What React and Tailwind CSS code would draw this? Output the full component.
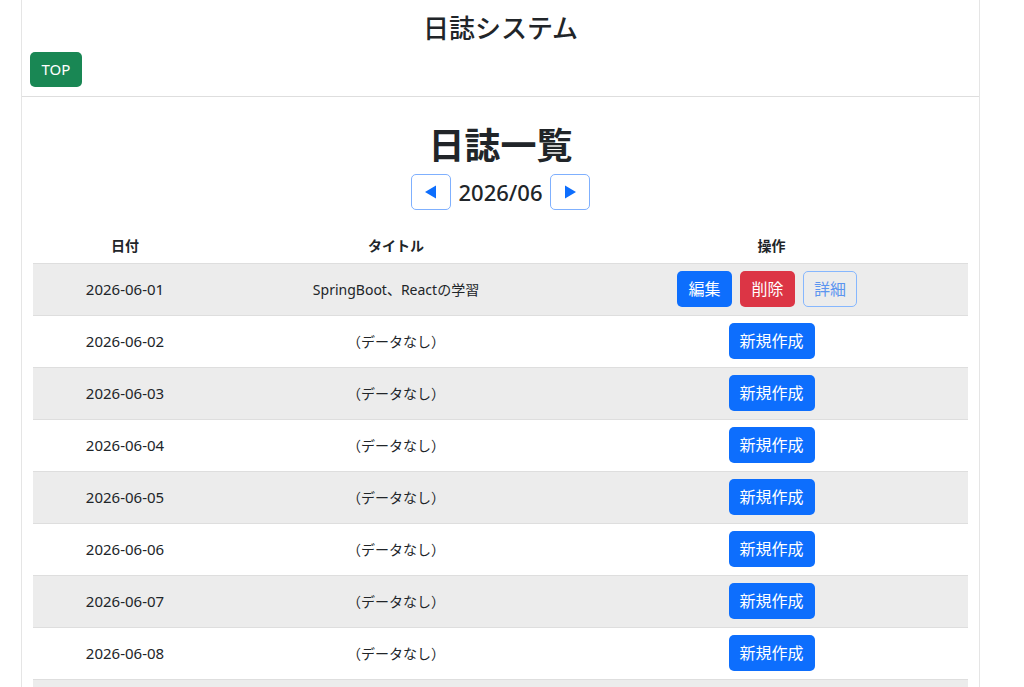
import React from "react";

const days = Array.from({ length: 9 }, (_, i) => {
  const d = String(i + 1).padStart(2, "0");
  return {
    date: `2026-06-${d}`,
    title: i === 0 ? "SpringBoot、Reactの学習" : null,
  };
});

const App = () => {
  return (
    <div
      className="min-h-screen bg-white text-[#212529]"
      style={{ fontFamily: '"Noto Sans", "Noto Sans CJK JP", sans-serif' }}
    >
      <div className="ml-[21px] w-[959px] min-h-screen border-x border-[#e5e5e5]">
        {/* Header */}
        <header className="border-b border-[#dedede] pb-[9px]">
          <h1 className="text-center text-[26px] font-medium leading-[56px]">
            日誌システム
          </h1>
          <div className="px-[8px] -mt-[4px]">
            <button className="h-[35px] w-[52px] rounded-[5px] bg-[#198754] text-[15px] text-white">
              TOP
            </button>
          </div>
        </header>

        {/* Journal list */}
        <main className="px-[11px] pt-[22px]">
          <h2 className="text-center text-[36px] font-bold leading-[54px]">
            日誌一覧
          </h2>
          <div className="flex items-center justify-center gap-[8px] mt-[1px]">
            <button className="flex h-[36px] w-[40px] items-center justify-center rounded-[5px] border border-[#7fb0fe] text-[#0d6efd]">
              <svg width="13" height="14" viewBox="0 0 13 14">
                <path d="M12 0.5 L1 7 L12 13.5 Z" fill="currentColor" />
              </svg>
            </button>
            <span className="text-[22px] font-medium">2026/06</span>
            <button className="flex h-[36px] w-[40px] items-center justify-center rounded-[5px] border border-[#7fb0fe] text-[#0d6efd]">
              <svg width="13" height="14" viewBox="0 0 13 14">
                <path d="M1 0.5 L12 7 L1 13.5 Z" fill="currentColor" />
              </svg>
            </button>
          </div>

          <table className="mt-[18px] w-[935px] table-fixed border-collapse text-[14px]">
            <colgroup>
              <col className="w-[184px]" />
              <col className="w-[358px]" />
              <col className="w-[393px]" />
            </colgroup>
            <thead>
              <tr className="h-[35px] border-b border-[#dedede]">
                <th className="font-bold">日付</th>
                <th className="font-bold">タイトル</th>
                <th className="font-bold">操作</th>
              </tr>
            </thead>
            <tbody>
              {days.map((row, i) => (
                <tr
                  key={row.date}
                  className={`h-[52px] border-b border-[#dedede] ${
                    i % 2 === 0 ? "bg-[#ececec]" : "bg-white"
                  }`}
                >
                  <td className="text-center text-[15px]">{row.date}</td>
                  <td className="text-center">{row.title ?? "（データなし）"}</td>
                  <td className="text-center">
                    {row.title ? (
                      <div className="flex justify-center gap-[8px] pr-[9px]">
                        <button className="h-[36px] w-[55px] rounded-[5px] bg-[#0d6efd] text-[16px] text-white">
                          編集
                        </button>
                        <button className="h-[36px] w-[55px] rounded-[5px] bg-[#dc3545] text-[16px] text-white">
                          削除
                        </button>
                        <button className="h-[36px] w-[54px] rounded-[5px] border border-[#86b7fe] text-[16px] text-[#5c95f0]">
                          詳細
                        </button>
                      </div>
                    ) : (
                      <button className="h-[36px] w-[86px] rounded-[5px] bg-[#0d6efd] text-[16px] text-white">
                        新規作成
                      </button>
                    )}
                  </td>
                </tr>
              ))}
            </tbody>
          </table>
        </main>
      </div>
    </div>
  );
};

export default App;
